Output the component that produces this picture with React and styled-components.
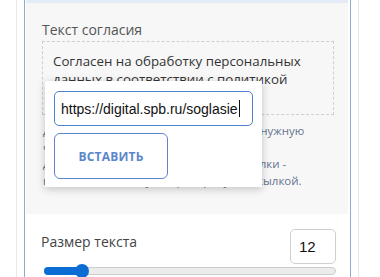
import React from 'react';
import styled, { createGlobalStyle } from 'styled-components';

const GlobalStyle = createGlobalStyle`
  body {
    margin: 0;
    background: #fff;
    font-family: "Open Sans", "Noto Sans", sans-serif;
    overflow: hidden;
  }
`;

export default function App() {
  return (
    <>
      <GlobalStyle />
      <Frame>
        <Panel>
          <TopBand />
          <ConsentSection>
            <Label>Текст согласия</Label>
            <Editor>
              Согласен на обработку персональных данных в соответствии с политикой
              конфиденциальности.
            </Editor>
            <Hint>
              Для вставки ссылки выделите мышью нужную<br />
              часть текста и нажмите кнопку.<br />
              Для удаления выделите весь текст ссылки -<br />
              нажмите на кнопку с перечёркнутой ссылкой.
            </Hint>
            <LinkPopup>
              <UrlField>
                https://digital.spb.ru/soglasie
                <Caret />
              </UrlField>
              <InsertButton>ВСТАВИТЬ</InsertButton>
            </LinkPopup>
          </ConsentSection>
          <SizeSection>
            <SizeRow>
              <SizeLabel>Размер текста</SizeLabel>
              <NumberBox>12</NumberBox>
            </SizeRow>
            <Slider>
              <SliderFill style={{ width: '37px' }} />
              <SliderThumb style={{ left: '30px' }} />
            </Slider>
          </SizeSection>
        </Panel>
      </Frame>
    </>
  );
}

const Frame = styled.div`
  margin-left: 16px;
  width: 327px;
  height: 277px;
  border-left: 1px solid #e8e8e8;
  border-right: 1px solid #e8e8e8;
  padding: 0 7px;
  box-sizing: content-box;
  display: flex;
`;

const Panel = styled.div`
  flex: 1;
  border-left: 1px solid #8fa9cf;
  border-right: 1px solid #8fa9cf;
  display: flex;
  flex-direction: column;
`;

const TopBand = styled.div`
  height: 3px;
  margin: 0 2px 0 1px;
  background: #e3ebf6;
`;

const ConsentSection = styled.section`
  position: relative;
  margin: 0 2px 0 1px;
  padding: 17px 14px 25px 16px;
  background: #f7f7f7;
`;

const Label = styled.div`
  font-size: 14px;
  line-height: 20px;
  color: #555;
  margin-bottom: 1px;
`;

const Editor = styled.div`
  border: 1px dashed #cfcfcf;
  padding: 10px 10px 8px;
  font-size: 13.3px;
  line-height: 18px;
  color: #333;
  height: 54px;
  overflow: hidden;
`;

const Hint = styled.p`
  margin: 8px 0 0 1px;
  font-size: 11.5px;
  line-height: 16.5px;
  color: #667590;
`;

const LinkPopup = styled.div`
  position: absolute;
  left: 19px;
  top: 78px;
  width: 217px;
  box-sizing: border-box;
  padding: 10px 9px 8px;
  background: #fff;
  box-shadow: 0 2px 8px rgba(0, 0, 0, 0.22);
  display: flex;
  flex-direction: column;
  align-items: flex-start;
  gap: 7px;
`;

const UrlField = styled.div`
  width: 199px;
  height: 35px;
  box-sizing: border-box;
  border: 1px solid #4d82cf;
  border-radius: 5px;
  padding: 0 6px;
  display: flex;
  align-items: center;
  font-family: "Liberation Sans", Arial, sans-serif;
  font-size: 14px;
  color: #111;
`;

const Caret = styled.span`
  display: inline-block;
  width: 1px;
  height: 17px;
  background: #111;
  margin-left: 1px;
`;

const InsertButton = styled.button`
  width: 114px;
  height: 46px;
  box-sizing: border-box;
  border: 1px solid #5b86cc;
  border-radius: 6px;
  background: #fff;
  color: #5b86cc;
  font-family: "Open Sans", sans-serif;
  font-weight: 700;
  font-size: 12px;
  letter-spacing: 0.2px;
  cursor: pointer;
`;

const SizeSection = styled.section`
  padding: 15px 14px 0 16px;
`;

const SizeRow = styled.div`
  display: flex;
  justify-content: space-between;
  align-items: flex-start;
`;

const SizeLabel = styled.div`
  margin-top: 3px;
  font-size: 14px;
  line-height: 20px;
  color: #444;
`;

const NumberBox = styled.div`
  width: 46px;
  height: 35px;
  box-sizing: border-box;
  border: 1px solid #cfcfcf;
  border-radius: 5px;
  padding-left: 8px;
  display: flex;
  align-items: center;
  font-family: "Liberation Sans", Arial, sans-serif;
  font-size: 15px;
  color: #111;
`;

const Slider = styled.div`
  position: relative;
  margin: 3px 0 0 3px;
  height: 8px;
  box-sizing: border-box;
  border: 1px solid #cdcdcd;
  border-radius: 4px;
  background: #ececec;
`;

const SliderFill = styled.div`
  position: absolute;
  left: -1px;
  top: -1px;
  height: 8px;
  border-radius: 4px;
  background: #0b6cd4;
`;

const SliderThumb = styled.div`
  position: absolute;
  top: -4px;
  width: 14px;
  height: 14px;
  border-radius: 50%;
  background: #0b6cd4;
`;
